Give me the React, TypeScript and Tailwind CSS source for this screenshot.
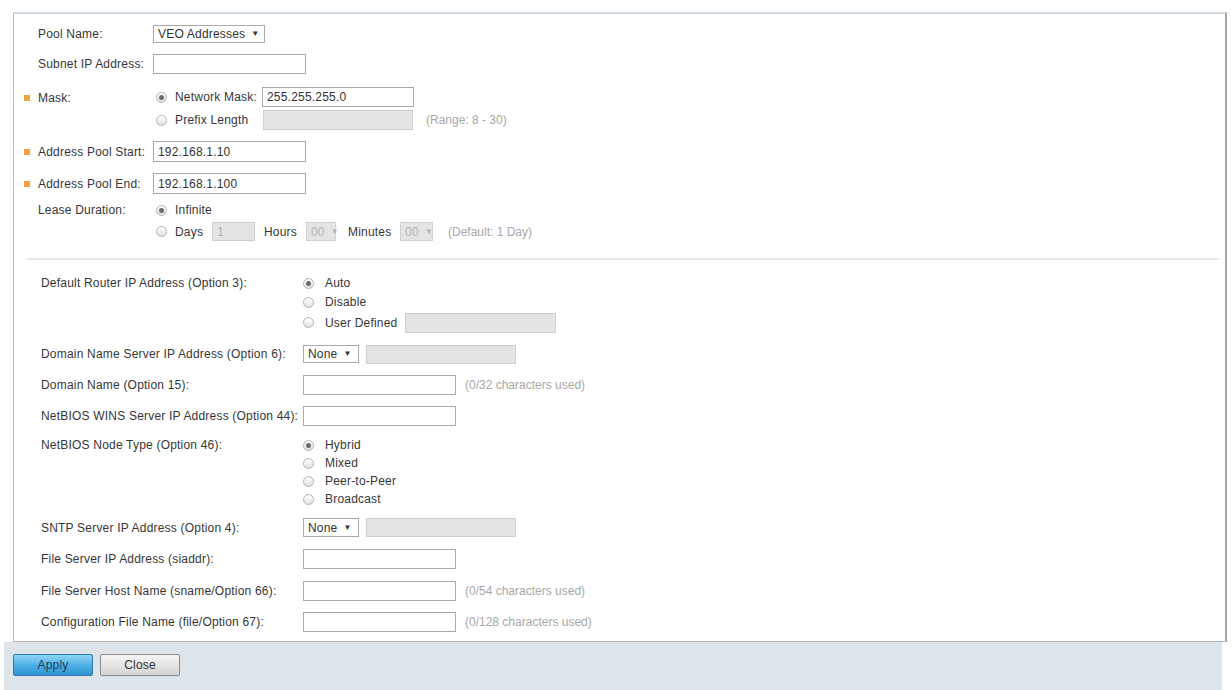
import React from "react";

const font = { fontFamily: '"Liberation Sans", Arial, sans-serif' };

function Radio({ checked = false }: { checked?: boolean }) {
  return (
    <span className="flex h-[11px] w-[11px] shrink-0 items-center justify-center rounded-full border border-[#b3b3b3] bg-gradient-to-b from-white to-[#e2e2e2]">
      {checked && <span className="h-[5px] w-[5px] rounded-full bg-[#6a6a6a]" />}
    </span>
  );
}

function Input({ w, value = "", disabled = false, h = "h-[20px]" }: { w: string; value?: string; disabled?: boolean; h?: string }) {
  return (
    <div
      className={`${w} ${h} flex items-center border px-[4px] text-[12px] ${
        disabled ? "border-[#cfcfcf] bg-[#e4e4e4] text-[#b0b0b0]" : "border-[#a9a9a9] bg-white text-[#333]"
      }`}
    >
      {value}
    </div>
  );
}

function Select({ w, value, disabled = false, h = "h-[18px]" }: { w: string; value: string; disabled?: boolean; h?: string }) {
  return (
    <div
      className={`${w} ${h} flex items-center gap-[6px] border px-[4px] text-[12px] ${
        disabled ? "border-[#d2d2d2] bg-[#e4e4e4] text-[#b5b5b5]" : "border-[#a9a9a9] bg-white text-[#333]"
      }`}
    >
      <span>{value}</span>
      <span className="text-[8px]">▼</span>
    </div>
  );
}

function Mark() {
  return (
    <span className="flex w-[14px] shrink-0 items-center">
      <span className="h-[6px] w-[6px] bg-[#e8a838]" />
    </span>
  );
}

function NoMark() {
  return <span className="w-[14px] shrink-0" />;
}

function Hint({ children, className = "" }: { children: React.ReactNode; className?: string }) {
  return <span className={`text-[12px] tracking-normal text-[#a8a8a8] ${className}`}>{children}</span>;
}

function LowRow({ label, children, className = "" }: { label: string; children: React.ReactNode; className?: string }) {
  return (
    <div className={`flex items-center ${className}`}>
      <span className="w-[279px] shrink-0 pl-[17px]">{label}</span>
      {children}
    </div>
  );
}

function LowRadio({ checked = false, label, labelW = "" }: { checked?: boolean; label: string; labelW?: string }) {
  return (
    <>
      <Radio checked={checked} />
      <span className={`ml-[11px] ${labelW}`}>{label}</span>
    </>
  );
}

export default function App() {
  return (
    <div className="relative h-[690px] w-[1232px] overflow-hidden bg-white text-[12px] tracking-[0.2px] text-[#363636]" style={font}>
      <div className="pt-[12px] pl-[13px]">
        <div className="w-[1214px] border-t-2 border-r-2 border-b border-l border-t-[#d3dce3] border-r-[#a3a3a3] border-b-[#b4b4b4] border-l-[#bdbdbd] pl-[10px] pb-[9px]">
          {/* Top section */}
          <div className="flex flex-col">
            <div className="mt-[11px] flex h-[18px] items-center">
              <NoMark />
              <span className="w-[115px]">Pool Name:</span>
              <Select w="w-[112px]" value="VEO Addresses" />
            </div>
            <div className="mt-[11px] flex h-[20px] items-center">
              <NoMark />
              <span className="w-[115px]">Subnet IP Address:</span>
              <Input w="w-[153px]" />
            </div>
            <div className="mt-[13px] flex items-start">
              <span className="mt-[5px] flex h-[12px] items-center">
                <Mark />
                <span className="w-[115px]">Mask:</span>
              </span>
              <div className="flex flex-col">
                <div className="flex h-[20px] items-center">
                  <span className="ml-[3px]"><Radio checked /></span>
                  <span className="ml-[8px] w-[87px]">Network Mask:</span>
                  <Input w="w-[152px]" value="255.255.255.0" />
                </div>
                <div className="mt-[3px] flex h-[20px] items-center">
                  <span className="ml-[3px]"><Radio /></span>
                  <span className="ml-[8px] w-[88px]">Prefix Length</span>
                  <Input w="w-[150px]" disabled />
                  <Hint className="ml-[13px]">(Range: 8 - 30)</Hint>
                </div>
              </div>
            </div>
            <div className="mt-[11px] flex h-[21px] items-center">
              <Mark />
              <span className="w-[115px]">Address Pool Start:</span>
              <Input w="w-[153px]" h="h-[21px]" value="192.168.1.10" />
            </div>
            <div className="mt-[11px] flex h-[21px] items-center">
              <Mark />
              <span className="w-[115px]">Address Pool End:</span>
              <Input w="w-[153px]" h="h-[21px]" value="192.168.1.100" />
            </div>
            <div className="mt-[9px] flex items-start">
              <NoMark />
              <span className="flex h-[14px] w-[115px] items-center">Lease Duration:</span>
              <div className="flex flex-col">
                <div className="flex h-[14px] items-center">
                  <span className="ml-[3px]"><Radio checked /></span>
                  <span className="ml-[8px]">Infinite</span>
                </div>
                <div className="mt-[5px] flex h-[19px] items-center">
                  <span className="ml-[3px]"><Radio /></span>
                  <span className="ml-[8px] w-[37px]">Days</span>
                  <Input w="w-[43px]" h="h-[19px]" value="1" disabled />
                  <span className="ml-[9px] w-[42px]">Hours</span>
                  <Select w="w-[30px]" h="h-[19px]" value="00" disabled />
                  <span className="ml-[12px] w-[52px]">Minutes</span>
                  <Select w="w-[33px]" h="h-[19px]" value="00" disabled />
                  <Hint className="ml-[15px]">(Default: 1 Day)</Hint>
                </div>
              </div>
            </div>
          </div>

          <div className="mt-[17px] mr-[6px] ml-[3px] h-[2px] bg-[#e6e6e6]" />

          {/* Lower section */}
          <div className="flex flex-col">
            <div className="mt-[14px] flex items-start">
              <span className="flex h-[18px] w-[279px] shrink-0 items-center pl-[17px]">Default Router IP Address (Option 3):</span>
              <div className="flex flex-col">
                <div className="flex h-[18px] items-center">
                  <LowRadio checked label="Auto" />
                </div>
                <div className="mt-[1px] flex h-[18px] items-center">
                  <LowRadio label="Disable" />
                </div>
                <div className="mt-[2px] flex h-[19px] items-center">
                  <LowRadio label="User Defined" labelW="w-[80px]" />
                  <Input w="w-[151px]" h="h-[20px]" disabled />
                </div>
              </div>
            </div>
            <LowRow label="Domain Name Server IP Address (Option 6):" className="mt-[13px] h-[18px]">
              <Select w="w-[56px]" value="None" />
              <span className="ml-[7px]"><Input w="w-[150px]" h="h-[19px]" disabled /></span>
            </LowRow>
            <LowRow label="Domain Name (Option 15):" className="mt-[12px] h-[20px]">
              <Input w="w-[153px]" />
              <Hint className="ml-[9px]">(0/32 characters used)</Hint>
            </LowRow>
            <LowRow label="NetBIOS WINS Server IP Address (Option 44):" className="mt-[11px] h-[20px]">
              <Input w="w-[153px]" />
            </LowRow>
            <div className="mt-[10px] flex items-start">
              <span className="flex h-[18px] w-[279px] shrink-0 items-center pl-[17px]">NetBIOS Node Type (Option 46):</span>
              <div className="flex flex-col">
                {["Hybrid", "Mixed", "Peer-to-Peer", "Broadcast"].map((t, i) => (
                  <div key={t} className="flex h-[18px] items-center">
                    <LowRadio checked={i === 0} label={t} />
                  </div>
                ))}
              </div>
            </div>
            <LowRow label="SNTP Server IP Address (Option 4):" className="mt-[10px] h-[19px]">
              <Select w="w-[56px]" h="h-[19px]" value="None" />
              <span className="ml-[7px]"><Input w="w-[150px]" h="h-[19px]" disabled /></span>
            </LowRow>
            <LowRow label="File Server IP Address (siaddr):" className="mt-[12px] h-[20px]">
              <Input w="w-[153px]" />
            </LowRow>
            <LowRow label="File Server Host Name (sname/Option 66):" className="mt-[12px] h-[20px]">
              <Input w="w-[153px]" />
              <Hint className="ml-[9px]">(0/54 characters used)</Hint>
            </LowRow>
            <LowRow label="Configuration File Name (file/Option 67):" className="mt-[11px] h-[20px]">
              <Input w="w-[153px]" />
              <Hint className="ml-[9px]">(0/128 characters used)</Hint>
            </LowRow>
          </div>
        </div>
      </div>

      {/* Footer */}
      <div className="ml-[4px] flex h-[60px] w-[1218px] items-start gap-[7px] bg-[#dde4ea] pt-[12px] pl-[9px]">
        <button className="flex h-[22px] w-[80px] items-center justify-center rounded-[2px] border border-[#3279ad] bg-gradient-to-b from-[#8fd3f4] via-[#4fb2e6] to-[#2d93d2] text-[12px] text-[#1c3d5e]" style={font}>
          Apply
        </button>
        <button className="flex h-[22px] w-[80px] items-center justify-center rounded-[2px] border border-[#8d8d8d] bg-gradient-to-b from-[#f6f6f6] to-[#d3d3d3] text-[12px] text-[#333]" style={font}>
          Close
        </button>
      </div>
    </div>
  );
}
